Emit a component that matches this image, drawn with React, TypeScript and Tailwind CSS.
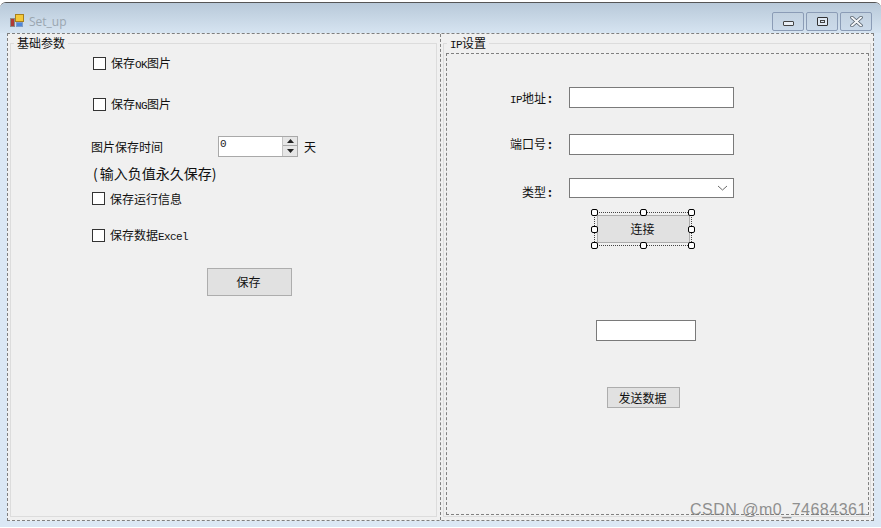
import React from 'react';

const uiFont = "font-['Noto_Sans_CJK_SC','Liberation_Sans',sans-serif]";

const Latin = ({ children }: { children: React.ReactNode }) => (
  <span className="font-['Liberation_Mono',monospace] text-[11px] leading-[12px] tracking-[-0.6px]">{children}</span>
);

const Colon = () => <span className="inline-block w-[8px] text-center font-bold">:</span>;

const Check = ({ children, className = '' }: { children: React.ReactNode; className?: string }) => (
  <div className={`flex items-center h-[13px] ${className}`}>
    <div className="w-[13px] h-[13px] border border-[#333] bg-white shrink-0" />
    <span className="ml-[5px] text-[12px] leading-[13px] text-[#111] whitespace-nowrap">{children}</span>
  </div>
);

const WinButton = ({ children, className = '' }: { children: React.ReactNode; className?: string }) => (
  <div className={`h-[19px] flex items-center justify-center rounded-[2px] border border-[#8b9cb6] bg-gradient-to-b from-[#c3d2e0] to-[#cbdaea] ${className}`}>
    {children}
  </div>
);

const Field = ({ label, children, className = '', labelClass = 'mt-[2px]' }: { label: React.ReactNode; children: React.ReactNode; className?: string; labelClass?: string }) => (
  <div className={`flex items-start h-[21px] ${className}`}>
    <div className={`w-[107px] h-[18px] text-right text-[12px] leading-[18px] text-[#111] whitespace-nowrap ${labelClass}`}>{label}</div>
    <div className="ml-[15px]">{children}</div>
  </div>
);

const Handle = ({ className }: { className: string }) => (
  <div className={`absolute w-[7px] h-[7px] rounded-[2px] border border-black bg-white ${className}`} />
);

const App = () => {
  return (
    <div className={`w-[881px] h-[528px] bg-white overflow-hidden relative ${uiFont}`}>
      <div className="mt-[2px] h-[525px] rounded-t-[6px] border-t border-[#555] bg-[#dbe8f5] flex flex-col">
        {/* title bar */}
        <div className="h-[30px] shrink-0 flex items-start rounded-t-[6px] bg-gradient-to-b from-[#b8c9d9] to-[#d6e4f1]">
          <svg width="15" height="14" viewBox="0 0 15 14" className="ml-[10px] mt-[11px] shrink-0">
            <rect x="0.5" y="4.5" width="4" height="8" fill="#b03a34" stroke="#8a8a8a" />
            <rect x="5.5" y="0.5" width="8" height="7" fill="#f4c93a" stroke="#a8801c" />
            <rect x="6.5" y="8.5" width="6" height="4" fill="#4f86d8" stroke="#7d9cc8" />
          </svg>
          <span className="ml-[4px] mt-[10px] text-[12px] leading-[18px] text-[#9aa6b0] font-['Open_Sans',sans-serif]">Set_up</span>
          <div className="ml-auto mr-[9px] mt-[9px] flex gap-[2px]">
            <WinButton className="w-[32px]">
              <div className="w-[11px] h-[5px] mt-[3px] border border-[#444] rounded-[1px] bg-[#e8eef5]" />
            </WinButton>
            <WinButton className="w-[32px]">
              <div className="w-[11px] h-[9px] border border-[#333] rounded-[1px] bg-[#dfe8f2] flex items-center justify-center">
                <div className="w-[5px] h-[3px] border border-[#444]" />
              </div>
            </WinButton>
            <WinButton className="w-[32px]">
              <svg width="13" height="11" viewBox="0 0 13 11">
                <path d="M2 1.5 L11 9.5 M11 1.5 L2 9.5" stroke="#4a5560" strokeWidth="3.4" strokeLinecap="round" />
                <path d="M2 1.5 L11 9.5 M11 1.5 L2 9.5" stroke="#f4f6f8" strokeWidth="2" strokeLinecap="round" />
              </svg>
            </WinButton>
          </div>
        </div>

        {/* designer surface */}
        <div className="mx-[7px] h-[488px] shrink-0 border border-dashed border-[#808080] bg-[#f0f0f0] flex">
          {/* left pane */}
          <div className="w-[432px] pt-[9px] pb-[3px] pl-[2px] pr-[3px] shrink-0">
            <div className="relative h-full border border-[#dcdcdc] pl-[81px] pt-[13px]">
              <span className="absolute left-[3px] top-[-9px] px-[3px] bg-[#f0f0f0] text-[12px] leading-[16px] text-[#111]">基础参数</span>
              <Check className="ml-px">保存<Latin>OK</Latin>图片</Check>
              <Check className="ml-px mt-[28px]">保存<Latin>NG</Latin>图片</Check>

              <div className="flex items-start mt-[25px] -ml-px">
                <div className="w-[127px] text-[12px] leading-[18px] mt-[2px] text-[#111]">图片保存时间</div>
                <div className="w-[80px] h-[21px] border border-[#a9a9a9] bg-white flex">
                  <span className="flex-1 pl-px font-['Liberation_Mono',monospace] text-[11px] leading-[14px] text-[#222]">0</span>
                  <div className="w-[15px] h-full bg-[#e6e6e6] border-l border-[#c4c4c4] flex flex-col items-center">
                    <div className="h-[9px] w-full flex items-center justify-center border-b border-[#a9a9a9]">
                      <svg width="7" height="4" viewBox="0 0 7 4"><path d="M3.5 0 L7 4 H0 Z" fill="#222" /></svg>
                    </div>
                    <div className="flex-1 w-full flex items-center justify-center">
                      <svg width="7" height="4" viewBox="0 0 7 4"><path d="M0 0 H7 L3.5 4 Z" fill="#222" /></svg>
                    </div>
                  </div>
                </div>
                <span className="ml-[6px] mt-[2px] text-[12px] leading-[18px] text-[#111]">天</span>
              </div>

              <div className="mt-[7px] h-[18px] text-[14px] leading-[18px] text-[#111] whitespace-nowrap"><span className="ml-px mr-[2px]">(</span>输入负值永久保存)</div>
              <Check className="mt-[10px]">保存运行信息</Check>
              <Check className="mt-[24px]">保存数据<Latin>Excel</Latin></Check>

              <div className="ml-[115px] mt-[26px] w-[85px] h-[28px] border border-[#adadad] bg-[#e1e1e1] flex items-center justify-center pr-[2px] text-[12px] text-[#111]">保存</div>
            </div>
          </div>

          {/* splitter */}
          <div className="w-px shrink-0 border-l border-dashed border-[#808080]" />

          {/* right pane */}
          <div className="flex-1 min-w-0 pt-[9px] pb-[3px] px-[2px]">
            <div className="relative h-full border border-[#dcdcdc] pt-[9px] pb-px pl-[2px] pr-px">
              <span className="absolute left-[3px] top-[-9px] px-[3px] bg-[#f0f0f0] text-[12px] leading-[16px] text-[#111]"><Latin>IP</Latin>设置</span>
              <div className="h-full border border-dashed border-[#808080] pt-[33px]">
                <Field label={<><Latin>IP</Latin>地址<Colon /></>}>
                  <div className="w-[165px] h-[21px] border border-[#7a7a7a] bg-white" />
                </Field>
                <Field label={<>端口号<Colon /></>} className="mt-[26px]" labelClass="mt-px">
                  <div className="w-[165px] h-[21px] border border-[#7a7a7a] bg-white" />
                </Field>
                <Field label={<>类型<Colon /></>} className="mt-[23px] !h-[20px]" labelClass="mt-[5px]">
                  <div className="w-[165px] h-[20px] border border-[#7a7a7a] bg-white flex items-center justify-end pr-[3px]">
                    <svg width="11" height="6" viewBox="0 0 11 6" className="mr-[2px]">
                      <path d="M1 1 L5.5 5 L10 1" fill="none" stroke="#6a6a6a" />
                    </svg>
                  </div>
                </Field>

                <div className="relative ml-[150px] mt-[17px] w-[93px] h-[28px] border border-[#adadad] bg-[#e1e1e1] flex items-center justify-center pr-[2px] text-[12px] text-[#111]">
                  连接
                  <div className="absolute left-[-4px] top-[-4px] w-[98px] h-[34px] border border-dotted border-[#444]" />
                  <Handle className="left-[-7px] top-[-7px]" />
                  <Handle className="left-[42px] top-[-7px]" />
                  <Handle className="left-[90px] top-[-7px]" />
                  <Handle className="left-[-7px] top-[10px]" />
                  <Handle className="left-[90px] top-[10px]" />
                  <Handle className="left-[-7px] top-[26px]" />
                  <Handle className="left-[42px] top-[26px]" />
                  <Handle className="left-[90px] top-[26px]" />
                </div>

                <div className="ml-[149px] mt-[77px] w-[100px] h-[21px] border border-[#7a7a7a] bg-white" />
                <div className="ml-[160px] mt-[46px] w-[73px] h-[21px] border border-[#adadad] bg-[#e1e1e1] flex items-center justify-center pr-[2px] text-[12px] text-[#111]">发送数据</div>
              </div>
            </div>
          </div>
        </div>
      </div>

      {/* watermark */}
      <span className="absolute left-[690px] top-[499px] text-[16px] leading-[22px] text-[#777] opacity-80 font-['Liberation_Sans',sans-serif] tracking-[0.5px] whitespace-nowrap">CSDN @m0_74684361</span>
    </div>
  );
};

export default App;
